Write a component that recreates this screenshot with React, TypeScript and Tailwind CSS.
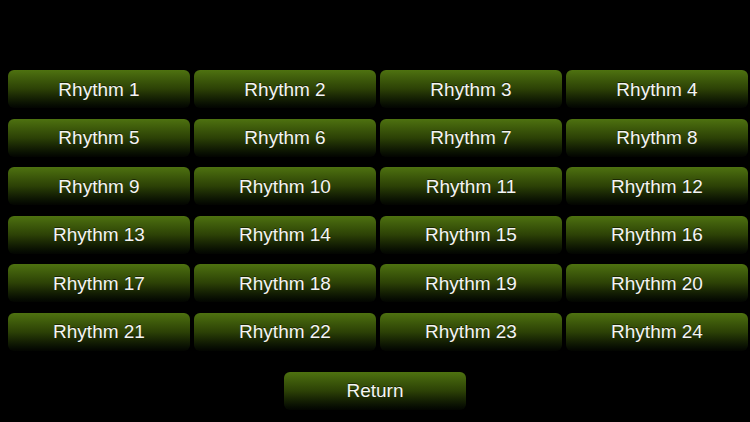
const rhythms = Array.from({ length: 24 }, (_, i) => `Rhythm ${i + 1}`)

function GreenButton({ label }: { label: string }) {
  return (
    <button className="h-[38px] w-full rounded-[6px] bg-gradient-to-b from-[#4e7210] via-[#2c4106] to-[#030501] text-[19px] leading-none text-[#f4f4f4] [font-family:'Liberation_Sans',Arial,sans-serif] [text-shadow:0_-1px_0_rgba(0,0,0,0.5)]">
      {label}
    </button>
  )
}

export default function App() {
  return (
    <div className="flex h-[422px] w-[750px] flex-col items-center bg-black pt-[70px]">
      <div className="grid w-full grid-cols-4 gap-x-[4px] gap-y-[10.6px] px-[8px] pr-[2px]">
        {rhythms.map((r) => (
          <GreenButton key={r} label={r} />
        ))}
      </div>
      <div className="mt-[21px] w-[182px]">
        <GreenButton label="Return" />
      </div>
    </div>
  )
}
